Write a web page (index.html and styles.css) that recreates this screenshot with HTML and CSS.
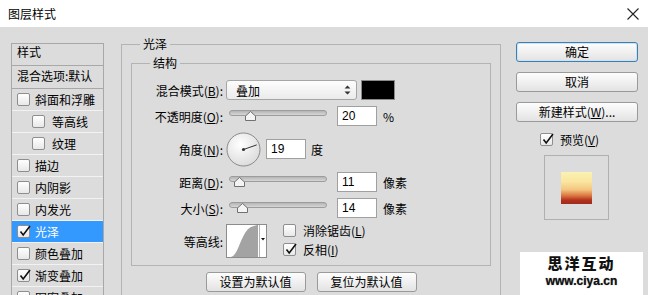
FILE: index.html
```html
<!DOCTYPE html>
<html lang="zh-CN">
<head>
    <meta charset="UTF-8">
    <meta name="viewport" content="width=device-width, initial-scale=1.0">
    <title>图层样式</title>
    <link rel="stylesheet" href="styles.css">
</head>
<body>
    <div class="titlebar">
        <span class="title">图层样式</span>
        <svg class="close" width="12" height="12" viewBox="0 0 12 12"><path d="M0.5 0.5 L11.5 11.5 M11.5 0.5 L0.5 11.5" stroke="#222" stroke-width="1.1" fill="none"/></svg>
    </div>

    <div class="dialog">
        <div class="stylelist">
            <div class="row head">样式</div>
            <div class="row blend">混合选项:默认</div>
            <div class="row"><span class="cb"></span>斜面和浮雕</div>
            <div class="row sub"><span class="cb"></span>等高线</div>
            <div class="row sub"><span class="cb"></span>纹理</div>
            <div class="row"><span class="cb"></span>描边</div>
            <div class="row"><span class="cb"></span>内阴影</div>
            <div class="row"><span class="cb"></span>内发光</div>
            <div class="row selected"><span class="cb"><svg width="13" height="13" viewBox="0 0 13 13"><path d="M2.5 6.5 L5.2 10 L12 1" stroke="#111" stroke-width="1.6" fill="none"/></svg></span>光泽</div>
            <div class="row"><span class="cb"></span>颜色叠加</div>
            <div class="row"><span class="cb"><svg width="13" height="13" viewBox="0 0 13 13"><path d="M2.5 6.5 L5.2 10 L12 1" stroke="#111" stroke-width="1.6" fill="none"/></svg></span>渐变叠加</div>
            <div class="row"><span class="cb"></span>图案叠加</div>
            <div class="row"><span class="cb"></span>外发光</div>
        </div>

        <div class="main">
            <fieldset class="group outer">
                <legend>光泽</legend>
                <fieldset class="group inner">
                    <legend>结构</legend>
                    <div class="form">
                        <div class="frow">
                            <span class="lbl">混合模式(<u>B</u>):</span>
                            <div class="select">
                                <span>叠加</span>
                                <svg width="7" height="10" viewBox="0 0 7 10"><path d="M3.5 0.5 L6.5 3.5 L0.5 3.5 Z M0.5 6.5 L6.5 6.5 L3.5 9.5 Z" fill="#333"/></svg>
                            </div>
                            <span class="swatch"></span>
                        </div>
                        <div class="frow">
                            <span class="lbl">不透明度(<u>O</u>):</span>
                            <div class="slider">
                                <div class="track"></div>
                                <svg class="thumb" style="left: 19px" width="11" height="10" viewBox="0 0 11 10"><path d="M5.5 0.5 L10.5 5 L10.5 9.5 L0.5 9.5 L0.5 5 Z" fill="#f4f4f4" stroke="#707070"/></svg>
                            </div>
                            <input class="num" type="text" value="20">
                            <span class="unit">%</span>
                        </div>
                        <div class="frow tall">
                            <span class="lbl">角度(<u>N</u>):</span>
                            <svg class="dial" width="35" height="35" viewBox="0 0 35 35">
                                <defs>
                                    <radialGradient id="dialfill" cx="0.4" cy="0.35" r="0.7">
                                        <stop offset="0" stop-color="#ffffff"/>
                                        <stop offset="1" stop-color="#dadada"/>
                                    </radialGradient>
                                </defs>
                                <circle cx="17.5" cy="17.5" r="16.5" fill="url(#dialfill)" stroke="#8a8a8a"/>
                                <path d="M17.5 17.5 L30.7 12.9" stroke="#333" stroke-width="1"/>
                                <circle cx="17.5" cy="17.5" r="1.6" fill="#333"/>
                            </svg>
                            <input class="num angle" type="text" value="19">
                            <span class="unit deg">度</span>
                        </div>
                        <div class="frow">
                            <span class="lbl">距离(<u>D</u>):</span>
                            <div class="slider">
                                <div class="track"></div>
                                <svg class="thumb" style="left: 8px" width="11" height="10" viewBox="0 0 11 10"><path d="M5.5 0.5 L10.5 5 L10.5 9.5 L0.5 9.5 L0.5 5 Z" fill="#f4f4f4" stroke="#707070"/></svg>
                            </div>
                            <input class="num" type="text" value="11">
                            <span class="unit">像素</span>
                        </div>
                        <div class="frow">
                            <span class="lbl">大小(<u>S</u>):</span>
                            <div class="slider">
                                <div class="track"></div>
                                <svg class="thumb" style="left: 11px" width="11" height="10" viewBox="0 0 11 10"><path d="M5.5 0.5 L10.5 5 L10.5 9.5 L0.5 9.5 L0.5 5 Z" fill="#f4f4f4" stroke="#707070"/></svg>
                            </div>
                            <input class="num" type="text" value="14">
                            <span class="unit">像素</span>
                        </div>
                        <div class="frow tall">
                            <span class="lbl">等高线:</span>
                            <svg class="contour" width="41" height="34" viewBox="0 0 41 34">
                                <rect x="0.5" y="0.5" width="40" height="33" fill="#fff" stroke="#8c8c8c"/>
                                <path d="M5 33 C 13 31, 15 8, 25 3 L 31 1 L 32 1 L 32 33 Z" fill="#a3a3a3"/>
                                <path d="M33.5 1 L33.5 33" stroke="#b5b5b5"/>
                                <path d="M35 14 L39 14 L37 16.5 Z" fill="#111"/>
                            </svg>
                            <div class="checks">
                                <label class="check"><span class="cb"></span><span>消除锯齿(<u>L</u>)</span></label>
                                <label class="check"><span class="cb"><svg width="13" height="13" viewBox="0 0 13 13"><path d="M2.5 6.5 L5.2 10 L12 1" stroke="#111" stroke-width="1.6" fill="none"/></svg></span><span>反相(<u>I</u>)</span></label>
                            </div>
                        </div>
                    </div>
                </fieldset>
                <div class="defaults">
                    <button class="btn">设置为默认值</button>
                    <button class="btn">复位为默认值</button>
                </div>
            </fieldset>
        </div>

        <div class="side">
            <button class="btn wide default">确定</button>
            <button class="btn wide">取消</button>
            <button class="btn wide">新建样式(<u>W</u>)...</button>
            <label class="check preview-check"><span class="cb"><svg width="13" height="13" viewBox="0 0 13 13"><path d="M2.5 6.5 L5.2 10 L12 1" stroke="#111" stroke-width="1.6" fill="none"/></svg></span><span>预览(<u>V</u>)</span></label>
            <div class="preview">
                <div class="sample"></div>
            </div>
        </div>
    </div>

    <div class="watermark">
        <div class="wm-name">思洋互动</div>
        <div class="wm-url">www.ciya.cn</div>
    </div>
</body>
</html>
```

FILE: styles.css
```css
body {
  margin: 0;
  width: 648px;
  height: 295px;
  overflow: hidden;
  position: relative;
  background: #dcdcdc;
  color: #000;
  font-family: "Noto Sans CJK SC", "Liberation Sans", sans-serif;
  font-size: 12px;
}

u {
  text-decoration: underline;
  text-underline-offset: 1px;
}

.titlebar {
  height: 27px;
  background: #fff;
  display: flex;
  align-items: center;
  justify-content: space-between;
  padding: 0 9px 0 8px;
}

.title {
  font-size: 12px;
  line-height: 16px;
}

.dialog {
  display: flex;
  align-items: flex-start;
  padding: 9px 0 0 11px;
}

/* left list of effects */
.stylelist {
  width: 93px;
  margin-top: 7px;
  border: 1px solid #a8a8a8;
  border-bottom: none;
  box-sizing: border-box;
}

.row {
  height: 22px;
  display: flex;
  align-items: center;
  gap: 5px;
  padding-left: 5px;
  border-bottom: 1px solid #f2f2f2;
  box-sizing: border-box;
  white-space: nowrap;
  line-height: 16px;
}

.row.head {
  height: 22px;
  align-items: flex-start;
  padding-top: 0;
  border-bottom-color: #a8a8a8;
}

.row.blend {
  height: 23px;
  align-items: flex-start;
  padding-top: 2px;
  border-bottom-color: #a8a8a8;
}

.row.sub {
  padding-left: 20px;
  gap: 7px;
}

.row.selected {
  background: #3399ff;
  color: #fff;
}

.cb {
  width: 13px;
  height: 13px;
  flex: none;
  border: 1px solid #8e8e8e;
  border-radius: 2px;
  background: linear-gradient(#ffffff, #e8e8e8);
  box-sizing: border-box;
  display: flex;
  align-items: center;
  justify-content: center;
  overflow: visible;
}

.cb svg {
  flex: none;
  margin: -1px -2px 0 0;
}

/* middle part */
.main {
  margin-left: 17px;
}

.group {
  margin: 0;
  border: 1px solid #b3b3b3;
  min-width: 0;
}

.group legend {
  padding: 0 3px;
  line-height: 16px;
  font-size: 12px;
}

.outer {
  width: 380px;
  box-sizing: border-box;
  padding: 3px 9px 20px;
}

.outer > legend {
  margin-left: 9px;
}

.inner {
  padding: 0 0 7px;
}

.inner > legend {
  margin-left: 18px;
}

.form {
  display: flex;
  flex-direction: column;
  gap: 6px;
  padding-top: 9px;
}

.frow {
  display: flex;
  align-items: center;
  height: 20px;
}

.frow.tall {
  height: 34px;
}

.lbl {
  width: 91px;
  margin-right: 3px;
  text-align: right;
  white-space: nowrap;
}

.select {
  width: 131px;
  height: 20px;
  box-sizing: border-box;
  border: 1px solid #a5a5a5;
  border-radius: 3px;
  background: linear-gradient(#fdfdfd, #ebebeb);
  display: flex;
  align-items: center;
  justify-content: space-between;
  padding: 0 5px 0 9px;
}

.swatch {
  width: 34px;
  height: 20px;
  margin-left: 4px;
  box-sizing: border-box;
  border: 1px solid #8a8a8a;
  background: #000;
}

.slider {
  position: relative;
  width: 104px;
  height: 20px;
}

.track {
  height: 6px;
  margin: 4px 3px 0;
  box-sizing: border-box;
  border: 1px solid #9c9c9c;
  border-radius: 3px;
  background: linear-gradient(#b5b5b5, #d6d6d6);
}

.thumb {
  position: absolute;
  top: 5px;
}

.num {
  width: 40px;
  height: 20px;
  margin: 0 0 0 7px;
  box-sizing: border-box;
  border: 1px solid #a0a0a0;
  background: #fff;
  padding: 0 0 0 4px;
  font-family: "Liberation Sans", sans-serif;
  font-size: 12px;
  color: #000;
  outline: none;
}

.num.angle {
  margin-left: 5px;
}

.unit {
  margin-left: 6px;
}

.unit.deg {
  margin-left: 5px;
}

.dial {
  flex: none;
}

.contour {
  flex: none;
  align-self: flex-start;
}

.checks {
  display: flex;
  flex-direction: column;
  gap: 6px;
  margin-left: 16px;
  align-self: flex-start;
}

.check {
  display: flex;
  align-items: center;
  gap: 7px;
  height: 13px;
  white-space: nowrap;
}

.defaults {
  display: flex;
  justify-content: center;
  gap: 11px;
  margin-top: 6px;
}

.btn {
  width: 100px;
  height: 20px;
  padding: 0;
  border: 1px solid #9a9a9a;
  border-radius: 3px;
  background: linear-gradient(#fdfdfd, #e3e3e3);
  font-family: "Noto Sans CJK SC", "Liberation Sans", sans-serif;
  font-size: 12px;
  line-height: 16px;
  color: #000;
}

/* right column */
.side {
  width: 122px;
  margin: 6px 0 0 15px;
  display: flex;
  flex-direction: column;
  gap: 10px;
}

.btn.wide {
  width: 122px;
}

.btn.default {
  border-color: #3c7fb1;
  box-shadow: inset 0 0 0 1px #cfe2f2;
}

.preview-check {
  padding-left: 24px;
  margin-top: 1px;
}

.preview {
  width: 65px;
  height: 65px;
  margin: -1px 0 0 28px;
  box-sizing: border-box;
  border: 1px solid #b0b0b0;
  display: flex;
  align-items: center;
  justify-content: center;
}

.sample {
  width: 31px;
  height: 32px;
  background: linear-gradient(#fbf1b2 0%, #f9e6a0 30%, #f3c57f 55%, #d9713f 75%, #b1321d 88%, #a22a1b 100%);
}

/* watermark over the dialog corner */
.watermark {
  position: absolute;
  left: 520px;
  top: 252px;
  width: 123px;
  height: 50px;
  background: #fff;
  text-align: center;
}

.wm-name {
  margin-top: 2px;
  font-size: 15px;
  font-weight: 900;
  line-height: 18px;
  letter-spacing: 2px;
  color: #111;
}

.wm-url {
  margin-top: 2px;
  font-family: "Liberation Sans", sans-serif;
  font-size: 12px;
  font-weight: bold;
  line-height: 14px;
  color: #111;
  text-shadow: 0 0 1px #666;
}
```
